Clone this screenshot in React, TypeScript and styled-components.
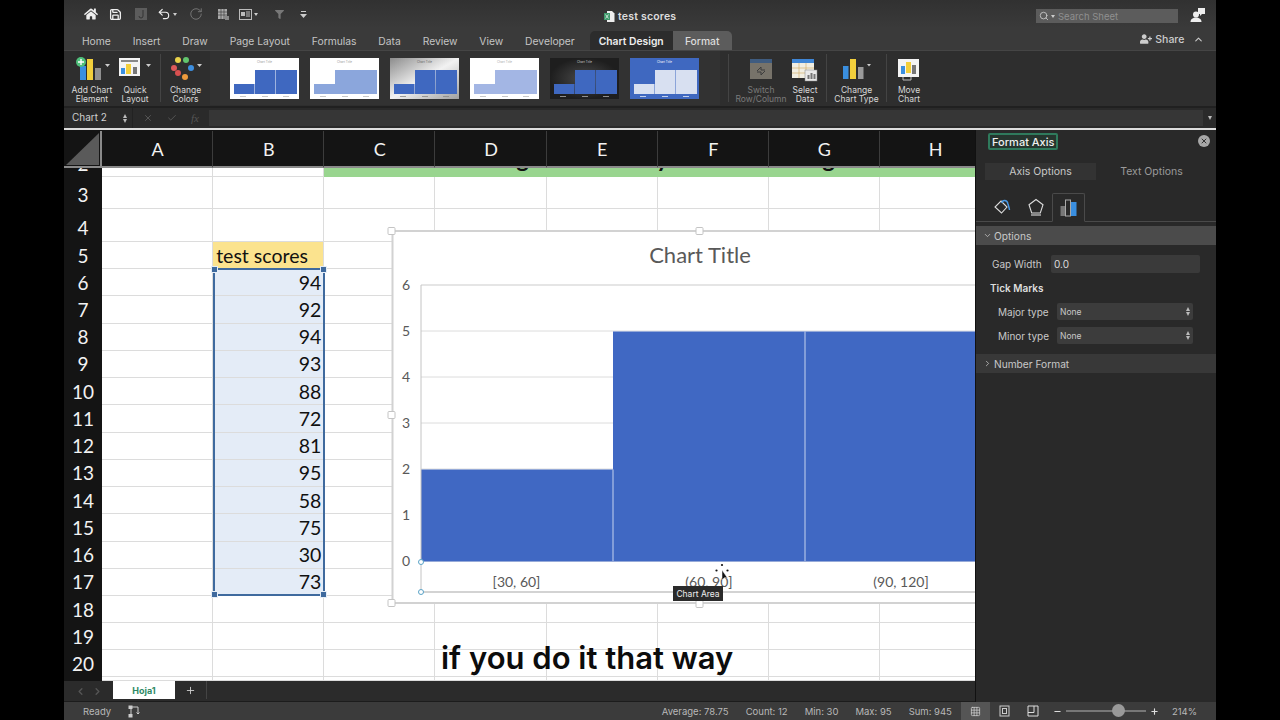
import { Fragment } from 'react';
import styled, { createGlobalStyle } from 'styled-components';
import { Undo2, RotateCw, Save, Search, X, Check, ChevronUp, ChevronDown, ChevronRight, ChevronLeft, Plus, Minus, Grid3x3 } from 'lucide-react';
import { FaHome, FaFilter, FaUserPlus } from 'react-icons/fa';

const GlobalStyle = createGlobalStyle`
  html, body {
    margin: 0;
    padding: 0;
    background: #000;
    font-family: Inter, "Liberation Sans", sans-serif;
  }
`;

const Frame = styled.div`
  width: 1152px;
  height: 720px;
  margin: 0 auto;
  display: flex;
  flex-direction: column;
  overflow: hidden;
  position: relative;
  color: #ddd;
`;

const TitleBar = styled.div`
  height: 28px;
  display: grid;
  grid-template-columns: 1fr 1fr;
  background: linear-gradient(#313131, #3a3a3a);
  position: relative;
`;

const QuickAccess = styled.div`
  display: flex;
  align-items: center;
  padding-left: 14px;
`;

const QuickButton = styled.div<{ $w: number; $dim?: boolean }>`
  width: ${p => p.$w}px;
  height: 28px;
  display: flex;
  align-items: center;
  justify-content: center;
  gap: 2px;
  color: ${p => (p.$dim ? '#777' : '#eee')};
`;

const Caret = styled.span<{ $dim?: boolean }>`
  width: 0;
  height: 0;
  border-left: 2.5px solid transparent;
  border-right: 2.5px solid transparent;
  border-top: 3px solid ${p => (p.$dim ? '#888' : '#ccc')};
`;

const DocTitle = styled.div`
  position: absolute;
  left: 539px;
  top: 0;
  height: 32px;
  display: flex;
  align-items: center;
  gap: 3px;
  font-size: 10.5px;
  font-weight: 600;
  letter-spacing: 0.2px;
  color: #ddd;
`;

const TitleRight = styled.div`
  display: flex;
  align-items: center;
  justify-content: flex-end;
  padding: 2px 10px 0 0;
  gap: 12px;
`;

const SearchBox = styled.div`
  width: 142px;
  height: 14px;
  margin-top: 2px;
  background: #5c5c5c;
  display: flex;
  align-items: center;
  gap: 2px;
  padding-left: 3px;
  box-sizing: border-box;
  font-size: 9.5px;
  color: #8f8f8f;
`;

const SearchHint = styled.span`
  margin-left: 1px;
`;

const TabRow = styled.div`
  height: 23px;
  display: flex;
  align-items: flex-start;
  padding-left: 7px;
  background: #3a3a3a;
  border-bottom: 1px solid #454545;
  box-sizing: border-box;
  position: relative;
`;

const MenuTab = styled.div<{ $kind?: 'design' | 'format' }>`
  height: 19px;
  margin-top: 3px;
  display: flex;
  align-items: center;
  justify-content: center;
  font-size: 10.3px;
  color: #c4c4c4;
  padding: 0 10.95px;
  ${p => p.$kind === 'design' && `
    background: #2c2c2c;
    color: #eee;
    font-weight: 600;
    border-radius: 5px 0 0 0;
    width: 83px;
    padding: 0;
    margin-left: 4px;
  `}
  ${p => p.$kind === 'format' && `
    background: #5c5c5c;
    color: #ddd;
    font-weight: 500;
    border-radius: 0 5px 0 0;
    width: 59px;
    padding: 0;
  `}
`;

const ShareBox = styled.div`
  margin-left: auto;
  padding: 0 12px 0 0;
  height: 100%;
  box-sizing: border-box;
  display: flex;
  align-items: center;
  gap: 3px;
  font-size: 10.5px;
  font-weight: 500;
  color: #ccc;
`;

const Ribbon = styled.div`
  height: 57px;
  display: flex;
  background: #2e2e2e;
  box-sizing: border-box;
  padding-left: 6px;
  border-bottom: 2px solid #202020;
`;

const RibbonItem = styled.div<{ $w: number; $dim?: boolean }>`
  width: ${p => p.$w}px;
  display: flex;
  flex-direction: column;
  align-items: center;
  padding-top: 5px;
  font-size: 8.5px;
  line-height: 9px;
  text-align: center;
  white-space: nowrap;
  color: ${p => (p.$dim ? '#7b7b7b' : '#d8d8d8')};
  svg { display: block; margin-bottom: 2px; }
`;

const RibbonSep = styled.div<{ $left?: number; $right?: number }>`
  width: 1px;
  height: 48px;
  margin: 3px ${p => p.$right ?? 0}px 0 ${p => p.$left ?? 0}px;
  background: #444;
`;

const Gallery = styled.div`
  width: 510px;
  height: 54px;
  box-sizing: border-box;
  padding: 7px 0 0 20px;
  display: flex;
  gap: 11px;
  background: #323232;
`;

const FormulaBar = styled.div`
  height: 20px;
  display: flex;
  align-items: center;
  background: #2a2a2a;
  font-size: 10px;
  color: #d0d0d0;
`;

const NameBox = styled.div`
  width: 53px;
  padding-left: 8px;
  box-sizing: border-box;
  margin-top: -2px;
`;

const Stepper = styled.div`
  width: 15px;
  height: 100%;
  display: flex;
  flex-direction: column;
  align-items: center;
  justify-content: center;
  gap: 1px;
  border-right: 1px solid #222;
`;

const StepArrow = styled.span<{ $down?: boolean }>`
  width: 0;
  height: 0;
  border-left: 2.5px solid transparent;
  border-right: 2.5px solid transparent;
  ${p => (p.$down ? 'border-top' : 'border-bottom')}: 4px solid #bbb;
`;

const FormulaIcons = styled.div`
  width: 76px;
  padding-left: 10px;
  box-sizing: border-box;
  display: flex;
  align-items: center;
  gap: 14px;
  color: #555;
`;

const FxMark = styled.span`
  font-family: "Liberation Serif", serif;
  font-style: italic;
  font-size: 11px;
  color: #555;
`;

const FormulaInput = styled.div`
  flex: 1;
  height: 16px;
  background: #363636;
`;

const FormulaDrop = styled.div`
  width: 13px;
  display: flex;
  justify-content: center;
`;

const WhiteRule = styled.div`
  height: 2px;
  background: #dcdcdc;
`;

const Workspace = styled.div`
  display: flex;
  height: 572px;
`;

const LeftColumn = styled.div`
  width: 911px;
  display: flex;
  flex-direction: column;
`;

const Sheet = styled.div`
  position: relative;
  height: 551px;
  overflow: hidden;
  background: #fff;
  border-top: 1px solid #141414;
  box-sizing: border-box;
`;

const SheetGrid = styled.div`
  display: grid;
  grid-template-columns: 38px repeat(8, 111.15px);
  grid-template-rows: 37px 9px 32px 33px 27px repeat(12, 27.25px) 27px 27px 27px 4px;
`;

const Corner = styled.div`
  background: #141414;
  border-bottom: 2px solid #8a8a8a;
  border-right: 2px solid #8a8a8a;
  box-sizing: border-box;
  padding: 2px;
  svg { display: block; }
`;

const ColHead = styled.div`
  background: #141414;
  color: #f2f2f2;
  border-bottom: 2px solid #8a8a8a;
  border-right: 1px solid #3c3c3c;
  box-sizing: border-box;
  display: flex;
  align-items: center;
  justify-content: center;
  padding-left: 1px;
  font-family: Lato, sans-serif;
  font-size: 18px;
`;

const RowHead = styled.div<{ $clip?: boolean; $low?: boolean }>`
  background: #141414;
  color: #f2f2f2;
  box-sizing: border-box;
  overflow: hidden;
  display: flex;
  align-items: ${p => (p.$clip ? 'flex-end' : 'center')};
  justify-content: center;
  font-family: Lato, sans-serif;
  font-size: 19px;
  line-height: ${p => (p.$clip ? '16px' : '24px')};
  padding-bottom: ${p => (p.$clip ? '5px' : '0')};
  padding-top: ${p => (p.$low ? '4px' : '0')};
`;

const Cell = styled.div<{ $fill?: string; $right?: boolean }>`
  background: ${p => p.$fill ?? '#fff'};
  border-right: 1px solid #dcdcdc;
  border-bottom: 1px solid #dcdcdc;
  box-sizing: border-box;
  color: #111;
  display: flex;
  align-items: center;
  justify-content: ${p => (p.$right ? 'flex-end' : 'flex-start')};
  padding: 0 2px 0 3px;
  font-family: Lato, sans-serif;
  font-size: 19.5px;
  white-space: nowrap;
`;

const GreenBand = styled.div`
  grid-column: 4 / span 6;
  background: #99d58f;
  overflow: hidden;
  display: grid;
  grid-template-columns: 192px 140px 166px 1fr;
  font-family: Lato, sans-serif;
  font-weight: 700;
  font-size: 24px;
  line-height: 24px;
  color: #111;
`;

const Tail = styled.span`
  margin-top: -22px;
`;

const Selection = styled.div`
  position: absolute;
  left: 149px;
  top: 137px;
  width: 112px;
  height: 328px;
  box-sizing: border-box;
  border: 2px solid #3f6a9e;
  pointer-events: none;
`;

const SelHandle = styled.span<{ $x: 'left' | 'right'; $y: 'top' | 'bottom' }>`
  position: absolute;
  ${p => p.$x}: -4px;
  ${p => p.$y}: -4px;
  width: 5px;
  height: 5px;
  background: #3f6a9e;
  border: 0.5px solid #e6eef7;
`;

const ChartLayer = styled.div`
  position: absolute;
  left: 321px;
  top: 94px;
  svg { display: block; }
  text { font-family: Lato, sans-serif; }
`;

const ChartTip = styled.div`
  position: absolute;
  left: 288px;
  top: 361px;
  width: 50px;
  height: 15px;
  background: #2a2a2a;
  color: #eee;
  font-size: 8.5px;
  display: flex;
  align-items: center;
  justify-content: center;
  white-space: nowrap;
`;

const Caption = styled.div`
  position: absolute;
  left: 377px;
  top: 507px;
  font-family: Inter, sans-serif;
  font-weight: 600;
  font-size: 31px;
  line-height: 40px;
  color: #0c0c0c;
  white-space: nowrap;
`;

const SheetTabs = styled.div`
  height: 21px;
  display: flex;
  background: #2b2b2b;
  border-bottom: 1px solid #1c1c1c;
  box-sizing: border-box;
  color: #555;
`;

const TabNav = styled.div`
  width: 49px;
  display: flex;
  align-items: center;
  justify-content: center;
  gap: 6px;
`;

const SheetTab = styled.div`
  width: 62px;
  height: 18px;
  background: #fff;
  color: #2f8a66;
  font-size: 9px;
  font-weight: 700;
  display: flex;
  align-items: center;
  justify-content: center;
`;

const AddSheet = styled.div`
  width: 31px;
  height: 18px;
  display: flex;
  align-items: center;
  justify-content: center;
  color: #ccc;
  border-right: 1px solid #444;
`;

const Panel = styled.div`
  width: 241px;
  background: #292929;
  border-left: 1px solid #111;
  box-sizing: border-box;
  font-size: 10px;
  color: #c8c8c8;
`;

const PanelHead = styled.div`
  height: 24px;
  padding: 3px 6px 0 12px;
  box-sizing: border-box;
  display: flex;
  align-items: flex-start;
  justify-content: space-between;
`;

const PanelTitle = styled.div`
  height: 17px;
  padding: 0 2px;
  display: flex;
  align-items: center;
  background: #26352e;
  border: 2px solid #2f7a5c;
  border-radius: 2px;
  box-sizing: border-box;
  color: #f0f0f0;
  font-size: 11px;
  font-weight: 500;
`;

const PanelClose = styled.div`
  width: 12px;
  height: 12px;
  margin-top: 2px;
  border-radius: 50%;
  background: #a8a8a8;
  color: #333;
  display: flex;
  align-items: center;
  justify-content: center;
`;

const PanelTabs = styled.div`
  display: flex;
  padding: 9px 0 0 9px;
`;

const PanelTab = styled.div<{ $active?: boolean }>`
  width: 111px;
  height: 17px;
  display: flex;
  align-items: center;
  justify-content: center;
  background: ${p => (p.$active ? '#333' : 'transparent')};
  color: ${p => (p.$active ? '#c8c8c8' : '#9a9a9a')};
  font-size: 10.5px;
`;

const IconTabs = styled.div`
  height: 42px;
  display: flex;
  align-items: flex-end;
  padding-left: 10px;
  border-bottom: 1px solid #4a4a4a;
  box-sizing: border-box;
`;

const IconTab = styled.div<{ $active?: boolean }>`
  width: 33px;
  height: 29px;
  display: flex;
  align-items: center;
  justify-content: center;
  box-sizing: border-box;
  ${p => p.$active && `
    border: 1px solid #4a4a4a;
    border-bottom: 1px solid #292929;
    margin-bottom: -1px;
    border-radius: 2px 2px 0 0;
  `}
`;

const SectionHead = styled.div<{ $open?: boolean }>`
  height: 19px;
  margin-top: ${p => (p.$open ? '4px' : '10px')};
  display: flex;
  align-items: center;
  gap: 2px;
  padding-left: 7px;
  background: ${p => (p.$open ? '#4b4b4b' : '#383838')};
  color: #c8c8c8;
  font-size: 10.2px;
`;

const FormRow = styled.div<{ $indent: number; $top: number }>`
  display: flex;
  align-items: center;
  padding-left: ${p => p.$indent}px;
  margin-top: ${p => p.$top}px;
`;

const RowLabel = styled.div<{ $w: number }>`
  width: ${p => p.$w}px;
  font-size: 10px;
  white-space: nowrap;
`;

const GapInput = styled.div`
  width: 149px;
  height: 18px;
  background: #3a3a3a;
  border-radius: 2px;
  display: flex;
  align-items: center;
  padding-left: 3px;
  box-sizing: border-box;
  font-size: 10px;
  color: #ddd;
`;

const GroupLabel = styled.div`
  margin: 9px 0 0 14px;
  font-size: 10px;
  font-weight: 600;
  color: #ddd;
`;

const SelectBox = styled.div`
  width: 136px;
  height: 17px;
  background: #3c3c3c;
  border-radius: 2px;
  padding: 0 3px;
  box-sizing: border-box;
  display: flex;
  align-items: center;
  justify-content: space-between;
  font-size: 8.5px;
  color: #c8c8c8;
`;

const SelectArrows = styled.div`
  display: flex;
  flex-direction: column;
  gap: 1px;
`;

const StatusBar = styled.div`
  height: 18px;
  display: flex;
  align-items: center;
  padding-left: 19px;
  background: #3b3b3b;
  font-size: 9.5px;
  color: #b8b8b8;
`;

const StatusIcon = styled.div`
  margin-left: 17px;
  display: flex;
`;

const Stats = styled.div`
  margin-left: auto;
  display: flex;
  gap: 17px;
  padding-right: 9px;
`;

const ViewButton = styled.div<{ $active?: boolean }>`
  width: 29px;
  height: 18px;
  display: flex;
  align-items: center;
  justify-content: center;
  background: ${p => (p.$active ? '#555' : 'transparent')};
  color: #d8d8d8;
`;

const Zoomer = styled.div`
  display: flex;
  align-items: center;
  gap: 4px;
  margin-left: 5px;
  color: #ddd;
`;

const SliderTrack = styled.div`
  position: relative;
  width: 80px;
  height: 2px;
  background: #777;
`;

const SliderKnob = styled.span`
  position: absolute;
  left: 46px;
  top: -6px;
  width: 13px;
  height: 13px;
  border-radius: 50%;
  background: #999;
`;

const ZoomValue = styled.div`
  margin: 0 19px 0 13px;
`;

const columns = ['A', 'B', 'C', 'D', 'E', 'F', 'G', 'H'];
const scores = [94, 92, 94, 93, 88, 72, 81, 95, 58, 75, 30, 73];
const rows = Array.from({ length: 20 }, (_, i) => i + 2);
const tabs = ['Home', 'Insert', 'Draw', 'Page Layout', 'Formulas', 'Data', 'Review', 'View', 'Developer'];

type ThumbProps = { bg: string; bar: string; gap: boolean; label: string; axis: string };

const thumbs: ThumbProps[] = [
  { bg: '#fff', bar: '#3f68c0', gap: true, label: '#999', axis: '#bbb' },
  { bg: '#fff', bar: '#8ba6dc', gap: false, label: '#999', axis: '#bbb' },
  { bg: 'url(#silver)', bar: '#3f68c0', gap: true, label: '#666', axis: '#888' },
  { bg: '#fff', bar: '#a3b6e4', gap: false, label: '#aaa', axis: '#bbb' },
  { bg: 'url(#dusk)', bar: '#3f68c0', gap: true, label: '#ccc', axis: '#aaa' },
  { bg: '#3f68c0', bar: '#d8e0f1', gap: true, label: '#fff', axis: '#e4eaf6' },
];

const Thumb = ({ bg, bar, gap, label, axis }: ThumbProps) => (
  <svg width="69" height="41" viewBox="0 0 69 41">
    <defs>
      <linearGradient id="silver" x1="0" y1="0" x2="1" y2="1">
        <stop offset="0" stopColor="#8c8c8c" />
        <stop offset="0.5" stopColor="#f2f2f2" />
        <stop offset="1" stopColor="#a0a0a0" />
      </linearGradient>
      <radialGradient id="dusk">
        <stop offset="0" stopColor="#4a4a4a" />
        <stop offset="1" stopColor="#1e1e1e" />
      </radialGradient>
    </defs>
    <rect width="69" height="41" fill={bg} />
    <text x="34.5" y="5" fontSize="3" textAnchor="middle" fill={label} fontFamily="Inter, sans-serif">Chart Title</text>
    <rect x="4" y="26" width={gap ? 20.5 : 21} height="10" fill={bar} />
    <rect x="25" y="12" width={gap ? 20.5 : 42} height="24" fill={bar} />
    {gap && <rect x="46" y="12" width="21" height="24" fill={bar} />}
    <rect x="10" y="38" width="6" height="0.8" fill={axis} />
    <rect x="32" y="38" width="6" height="0.8" fill={axis} />
    <rect x="53" y="38" width="6" height="0.8" fill={axis} />
  </svg>
);

const AddChartIcon = () => (
  <svg width="40" height="28" viewBox="0 0 40 28">
    <rect x="8" y="10" width="6" height="14" fill="#3a8fe0" />
    <rect x="15" y="3" width="6" height="21" fill="#f2cf3c" />
    <rect x="23" y="12" width="6" height="12" fill="#8f8f8f" />
    <circle cx="9" cy="6" r="5" fill="#4fbf7a" />
    <path d="M9 3v6M6 6h6" stroke="#fff" strokeWidth="1.4" />
    <path d="M33 8h5l-2.5 3z" fill="#ccc" />
  </svg>
);

const QuickLayoutIcon = () => (
  <svg width="38" height="28" viewBox="0 0 38 28">
    <rect x="3" y="2" width="21" height="18" fill="#f4f4f4" />
    <rect x="5" y="4" width="17" height="2" fill="#888" />
    <rect x="5" y="12" width="4" height="6" fill="#3a8fe0" />
    <rect x="10" y="8" width="5" height="10" fill="#f2cf3c" />
    <rect x="17" y="11" width="4" height="7" fill="#777" />
    <path d="M30 8h5l-2.5 3z" fill="#ccc" />
  </svg>
);

const ColorsIcon = () => (
  <svg width="38" height="28" viewBox="0 0 38 28">
    <circle cx="11" cy="4" r="3" fill="#e9d24a" />
    <circle cx="19" cy="4" r="3" fill="#62c56e" />
    <circle cx="7" cy="12" r="3" fill="#dd5a5a" />
    <circle cx="24" cy="12" r="3" fill="#3d8fe0" />
    <circle cx="11" cy="17" r="3" fill="#d85050" />
    <circle cx="18" cy="21" r="3" fill="#ee9a3c" />
    <path d="M30 8h5l-2.5 3z" fill="#ccc" />
  </svg>
);

const SwitchIcon = () => (
  <svg width="24" height="28" viewBox="0 0 24 28">
    <rect x="1" y="3" width="22" height="4" fill="#3f5c80" />
    <rect x="1" y="7" width="22" height="16" fill="#77736a" />
    <path d="M8 15l4-4v3h4M16 15l-4 4v-3H8" stroke="#3d3d3d" strokeWidth="1" fill="none" />
  </svg>
);

const SelectDataIcon = () => (
  <svg width="28" height="28" viewBox="0 0 28 28">
    <rect x="1" y="3" width="22" height="4" fill="#3f86d6" />
    <rect x="1" y="7" width="22" height="15" fill="#f1eee2" />
    <path d="M1 12h22M1 17h22M8 7v15M15 7v15" stroke="#d2a860" strokeWidth="0.6" />
    <rect x="14" y="14" width="12" height="11" fill="#e9e9e9" stroke="#888" strokeWidth="0.5" />
    <rect x="16.5" y="19" width="2" height="4" fill="#777" />
    <rect x="19.5" y="17" width="2" height="6" fill="#777" />
    <rect x="22.5" y="18" width="2" height="5" fill="#777" />
  </svg>
);

const ChartTypeIcon = () => (
  <svg width="34" height="28" viewBox="0 0 34 28">
    <rect x="3" y="10" width="5.5" height="13" fill="#3a8fe0" />
    <rect x="10" y="3" width="6" height="20" fill="#f2cf3c" />
    <rect x="18" y="11" width="5.5" height="12" fill="#9a9a9a" />
    <path d="M27 8h4l-2 2.5z" fill="#ccc" />
  </svg>
);

const MoveChartIcon = () => (
  <svg width="24" height="28" viewBox="0 0 24 28">
    <rect x="1" y="3" width="21" height="18" fill="#f4f4f4" />
    <rect x="4" y="10" width="4" height="8" fill="#3a8fe0" />
    <rect x="9" y="6" width="5" height="11" fill="#f2cf3c" />
    <rect x="15" y="9" width="4" height="9" fill="#777" />
    <path d="M6 21v3h8v-3" stroke="#bbb" strokeWidth="1" fill="none" />
  </svg>
);

const ExcelDocIcon = () => (
  <svg width="12" height="13" viewBox="0 0 12 13">
    <path d="M4 1h5l2.5 2.5V12H4z" fill="#eee" />
    <rect x="1" y="3" width="6" height="7" fill="#3f9a6c" />
    <path d="M2.5 4.5l3 4M5.5 4.5l-3 4" stroke="#fff" strokeWidth="0.7" />
  </svg>
);

const CommentsIcon = () => (
  <svg width="16" height="16" viewBox="0 0 16 16" fill="#eee">
    <path d="M8 1h7v6h-3l-2 2V7H8z" />
    <circle cx="6" cy="7.5" r="3" />
    <path d="M0.5 15c0-3 2.5-4.5 5.5-4.5s5.500 1.500 5.500 4.500z" />
  </svg>
);

const MacroIcon = () => (
  <svg width="13" height="13" viewBox="0 0 13 13" fill="none" stroke="#ccc" strokeWidth="1">
    <path d="M3 2v9M3 2h7M10 2v7M10 9l-1.500-1.500M10 9l1.500-1.500" />
    <rect x="1" y="1" width="3" height="2.500" fill="#ccc" />
    <rect x="1" y="9.500" width="3" height="2.500" fill="#ccc" />
  </svg>
);

const GridButtonIcon = () => <Grid3x3 size={11} strokeWidth={1.5} />;

const PageIcon = () => (
  <svg width="11" height="12" viewBox="0 0 11 12" fill="none" stroke="#ccc">
    <rect x="1" y="1" width="9" height="10" />
    <rect x="3.500" y="3.500" width="4" height="5" />
  </svg>
);

const BreakIcon = () => (
  <svg width="12" height="12" viewBox="0 0 12 12" fill="none" stroke="#ddd">
    <path d="M1 1h10v10H1zM1 7.500h6V1" />
  </svg>
);

const FillIcon = () => (
  <svg width="20" height="18" viewBox="0 0 20 18" fill="none">
    <path d="M8 3l6 6-5.500 6L2 9z" stroke="#ddd" strokeWidth="1.100" />
    <path d="M9 5c0-3 5-4 6 1 .5 2 1 3 1.500 6" stroke="#4a9be8" strokeWidth="1.400" />
  </svg>
);

const ShapeIcon = () => (
  <svg width="18" height="18" viewBox="0 0 18 18" fill="none" stroke="#ddd" strokeWidth="1.100">
    <path d="M9 1.500l7 5.200-2.700 8.300H4.700L2 6.700z" />
    <path d="M4 17h10" />
  </svg>
);

const BarsIcon = () => (
  <svg width="17" height="19" viewBox="0 0 17 19">
    <rect x="0.500" y="8" width="5" height="10" fill="#777" />
    <rect x="5.500" y="2" width="5" height="16" fill="none" stroke="#aaa" />
    <rect x="11" y="4" width="5.500" height="14" fill="#3a8fe0" />
  </svg>
);

const ChartDrawing = () => {
  const ticks = [
    { v: 6, y: 285 },
    { v: 5, y: 331 },
    { v: 4, y: 377 },
    { v: 3, y: 423 },
    { v: 2, y: 469 },
    { v: 1, y: 515 },
    { v: 0, y: 561 },
  ];
  const handle = (x: number, y: number) => (
    <rect x={x - 4} y={y - 3.5} width="7" height="7" rx="1" fill="#fff" stroke="#c4c4c4" />
  );
  return (
    <svg width="620" height="390" viewBox="385 225 620 390">
      <rect x="392.500" y="231" width="620" height="372" fill="#fff" stroke="#d2d2d2" strokeWidth="2" />
      <text x="700" y="263" fontSize="22" textAnchor="middle" fill="#595959">Chart Title</text>
      {ticks.map(t => (
        <Fragment key={t.v}>
          <line x1="421" x2="1005" y1={t.y} y2={t.y} stroke="#dcdcdc" strokeWidth={t.v === 6 ? 1.5 : 1} />
          <text x="406" y={t.y + 5} fontSize="14" textAnchor="middle" fill="#595959">{t.v}</text>
        </Fragment>
      ))}
      <rect x="421" y="469.500" width="192" height="92" fill="#4068c3" />
      <rect x="613" y="331.500" width="192" height="230" fill="#4068c3" />
      <rect x="805" y="331.500" width="200" height="230" fill="#4068c3" />
      <line x1="613" x2="613" y1="469.500" y2="561" stroke="#c5d2ee" />
      <line x1="805" x2="805" y1="331.500" y2="561" stroke="#c5d2ee" />
      <line x1="421" x2="421" y1="285" y2="592" stroke="#c4c4c4" />
      <line x1="421" x2="1005" y1="592" y2="592" stroke="#c4c4c4" strokeWidth="1.500" />
      <circle cx="421" cy="562" r="2.500" fill="#fff" stroke="#5aa3c7" />
      <circle cx="421" cy="592" r="2.500" fill="#fff" stroke="#5aa3c7" />
      <text x="516.500" y="587" fontSize="14" textAnchor="middle" fill="#595959">[30, 60]</text>
      <text x="709" y="587" fontSize="14" textAnchor="middle" fill="#595959">(60, 90]</text>
      <text x="901" y="587" fontSize="14" textAnchor="middle" fill="#595959">(90, 120]</text>
      {handle(392, 231)}
      {handle(700, 231)}
      {handle(392, 415)}
      {handle(392, 603)}
      {handle(700, 604)}
      <g fill="#111">
        <circle cx="722" cy="565" r="1.100" />
        <circle cx="716.500" cy="570.500" r="1.100" />
        <circle cx="727.500" cy="570.500" r="1.100" />
        <path d="M722 570l0 10 2.500-2.400 3 .4z" stroke="#fff" strokeWidth="0.500" />
      </g>
    </svg>
  );
};

const App = () => (
  <Frame>
    <GlobalStyle />
    <TitleBar>
      <QuickAccess>
        <QuickButton $w={25}><FaHome size={14} /></QuickButton>
        <QuickButton $w={25}><Save size={13} strokeWidth={2.4} /></QuickButton>
        <QuickButton $w={25} $dim><svg width="12" height="12" viewBox="0 0 12 12"><rect width="12" height="12" fill="#5c5c5c" /><path d="M8 2v6a2 2 0 0 1-4 0" stroke="#333" fill="none" /></svg></QuickButton>
        <QuickButton $w={28}><Undo2 size={14} strokeWidth={2} /><Caret /></QuickButton>
        <QuickButton $w={30} $dim><RotateCw size={14} strokeWidth={1.6} /></QuickButton>
        <QuickButton $w={25}><svg width="13" height="13" viewBox="0 0 13 13"><rect x="1" y="1" width="9" height="10" fill="#aaa" /><path d="M1 4h9M1 7h9M4 1v10M7 1v10" stroke="#333" strokeWidth="0.600" /><rect x="8" y="8" width="4" height="4" fill="#888" /></svg></QuickButton>
        <QuickButton $w={25}><svg width="13" height="11" viewBox="0 0 13 11"><rect x="0.500" y="0.500" width="12" height="10" fill="none" stroke="#bbb" /><rect x="2" y="3" width="4" height="4" fill="#bbb" /><path d="M7 3h4M7 5h4M7 7h4" stroke="#bbb" /></svg><Caret /></QuickButton>
        <QuickButton $w={36} $dim><FaFilter size={9} /></QuickButton>
        <QuickButton $w={12}><svg width="7" height="7" viewBox="0 0 7 7"><rect x="1" width="5" height="1" fill="#ccc" /><path d="M0 3h7L3.500 7z" fill="#ccc" /></svg></QuickButton>
      </QuickAccess>
      <DocTitle><ExcelDocIcon />test scores</DocTitle>
      <TitleRight>
        <SearchBox><Search size={10} strokeWidth={2} color="#ccc" /><Caret /><SearchHint>Search Sheet</SearchHint></SearchBox>
        <CommentsIcon />
      </TitleRight>
    </TitleBar>

    <TabRow>
      {tabs.map(t => <MenuTab key={t}>{t}</MenuTab>)}
      <MenuTab $kind="design">Chart Design</MenuTab>
      <MenuTab $kind="format">Format</MenuTab>
      <ShareBox><FaUserPlus size={12} />Share&nbsp;&nbsp;<ChevronUp size={11} strokeWidth={2.4} /></ShareBox>
    </TabRow>

    <Ribbon>
      <RibbonItem $w={44}><AddChartIcon />Add Chart<br />Element</RibbonItem>
      <RibbonItem $w={42}><QuickLayoutIcon />Quick<br />Layout</RibbonItem>
      <RibbonSep $left={4} />
      <RibbonItem $w={49}><ColorsIcon />Change<br />Colors</RibbonItem>
      <Gallery>
        {thumbs.map((t, i) => <Thumb key={i} {...t} />)}
      </Gallery>
      <RibbonSep $left={8} $right={3} />
      <RibbonItem $w={58} $dim><SwitchIcon />Switch<br />Row/Column</RibbonItem>
      <RibbonItem $w={30}><SelectDataIcon />Select<br />Data</RibbonItem>
      <RibbonSep $left={6} />
      <RibbonItem $w={59}><ChartTypeIcon />Change<br />Chart Type</RibbonItem>
      <RibbonSep />
      <RibbonItem $w={44}><MoveChartIcon />Move<br />Chart</RibbonItem>
    </Ribbon>

    <FormulaBar>
      <NameBox>Chart 2</NameBox>
      <Stepper><StepArrow /><StepArrow $down /></Stepper>
      <FormulaIcons>
        <X size={10} strokeWidth={2.4} />
        <Check size={10} strokeWidth={2.4} />
        <FxMark>fx</FxMark>
      </FormulaIcons>
      <FormulaInput />
      <FormulaDrop><StepArrow $down /></FormulaDrop>
    </FormulaBar>
    <WhiteRule />

    <Workspace>
      <LeftColumn>
        <Sheet>
          <SheetGrid>
            <Corner>
              <svg width="33" height="32" viewBox="0 0 33 32"><path d="M33 0v32H0z" fill="#5a5a5a" /></svg>
            </Corner>
            {columns.map(c => <ColHead key={c}>{c}</ColHead>)}
            {rows.map(r => (
              <Fragment key={r}>
                <RowHead $clip={r === 2} $low={r === 3 || r === 4}>{r === 21 ? '' : r}</RowHead>
                {r === 2 ? (
                  <>
                    <Cell />
                    <Cell />
                    <GreenBand>
                      <span />
                      <Tail>g</Tail>
                      <Tail>y</Tail>
                      <Tail>g</Tail>
                    </GreenBand>
                  </>
                ) : (
                  columns.map(c => {
                    if (c === 'B' && r === 5) return <Cell key={c} $fill="#fbe38e">test scores</Cell>;
                    if (c === 'B' && r >= 6 && r <= 17) return <Cell key={c} $fill="#e4ecf7" $right>{scores[r - 6]}</Cell>;
                    return <Cell key={c} />;
                  })
                )}
              </Fragment>
            ))}
          </SheetGrid>
          <Selection>
            <SelHandle $x="left" $y="top" />
            <SelHandle $x="right" $y="top" />
            <SelHandle $x="left" $y="bottom" />
            <SelHandle $x="right" $y="bottom" />
          </Selection>
          <ChartLayer>
            <ChartDrawing />
            <ChartTip>Chart Area</ChartTip>
          </ChartLayer>
          <Caption>if you do it that way</Caption>
        </Sheet>
        <SheetTabs>
          <TabNav><ChevronLeft size={11} strokeWidth={3} /><ChevronRight size={11} strokeWidth={3} /></TabNav>
          <SheetTab>Hoja1</SheetTab>
          <AddSheet><Plus size={11} strokeWidth={2} /></AddSheet>
        </SheetTabs>
      </LeftColumn>

      <Panel>
        <PanelHead>
          <PanelTitle>Format Axis</PanelTitle>
          <PanelClose><X size={8} strokeWidth={3} /></PanelClose>
        </PanelHead>
        <PanelTabs>
          <PanelTab $active>Axis Options</PanelTab>
          <PanelTab>Text Options</PanelTab>
        </PanelTabs>
        <IconTabs>
          <IconTab><FillIcon /></IconTab>
          <IconTab><ShapeIcon /></IconTab>
          <IconTab $active><BarsIcon /></IconTab>
        </IconTabs>
        <SectionHead $open><ChevronDown size={9} strokeWidth={2} />Options</SectionHead>
        <FormRow $indent={16} $top={10}>
          <RowLabel $w={59}>Gap Width</RowLabel>
          <GapInput>0.0</GapInput>
        </FormRow>
        <GroupLabel>Tick Marks</GroupLabel>
        <FormRow $indent={22} $top={9}>
          <RowLabel $w={59}>Major type</RowLabel>
          <SelectBox>None<SelectArrows><StepArrow /><StepArrow $down /></SelectArrows></SelectBox>
        </FormRow>
        <FormRow $indent={22} $top={7}>
          <RowLabel $w={59}>Minor type</RowLabel>
          <SelectBox>None<SelectArrows><StepArrow /><StepArrow $down /></SelectArrows></SelectBox>
        </FormRow>
        <SectionHead><ChevronRight size={9} strokeWidth={2} />Number Format</SectionHead>
      </Panel>
    </Workspace>

    <StatusBar>
      Ready
      <StatusIcon><MacroIcon /></StatusIcon>
      <Stats>
        <span>Average: 78.75</span>
        <span>Count: 12</span>
        <span>Min: 30</span>
        <span>Max: 95</span>
        <span>Sum: 945</span>
      </Stats>
      <ViewButton $active><GridButtonIcon /></ViewButton>
      <ViewButton><PageIcon /></ViewButton>
      <ViewButton><BreakIcon /></ViewButton>
      <Zoomer>
        <Minus size={9} strokeWidth={3} />
        <SliderTrack><SliderKnob /></SliderTrack>
        <Plus size={9} strokeWidth={3} />
      </Zoomer>
      <ZoomValue>214%</ZoomValue>
    </StatusBar>
  </Frame>
);

export default App;
